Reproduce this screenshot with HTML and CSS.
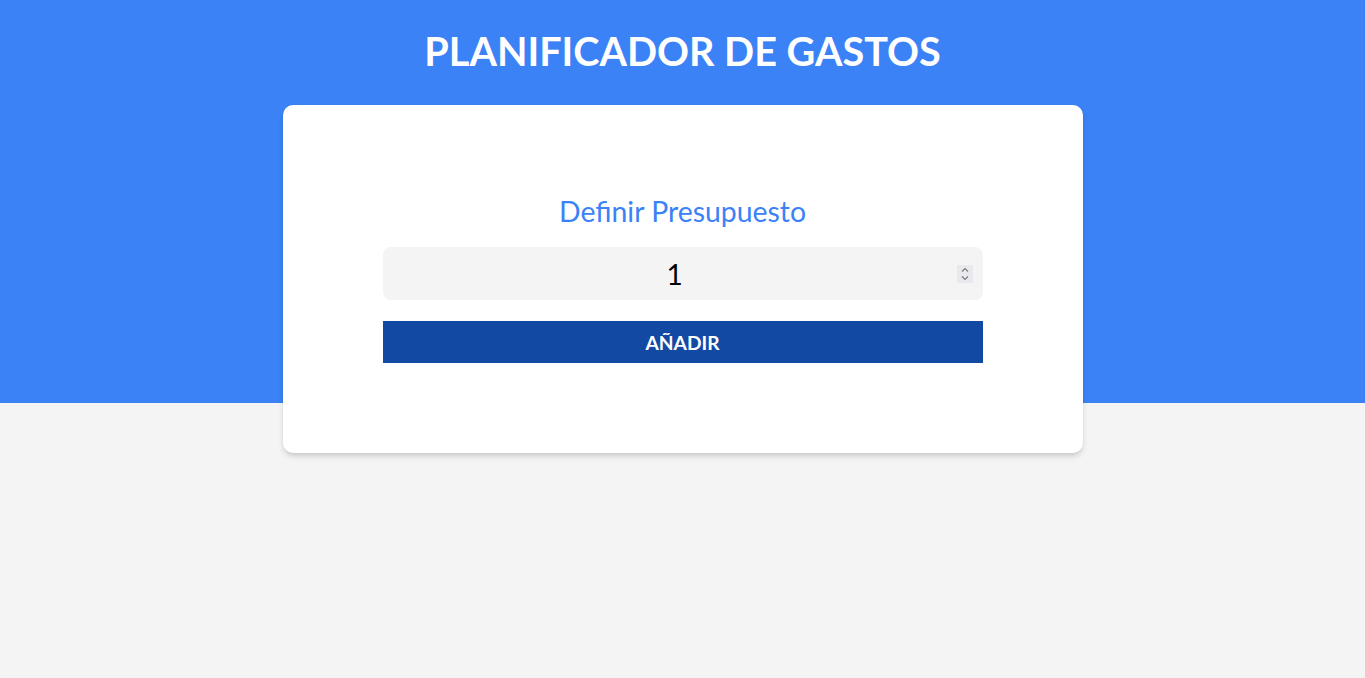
FILE: index.html
```html
<!DOCTYPE html>
<html lang="es">
<head>
  <meta charset="UTF-8" />
  <meta name="viewport" content="width=device-width, initial-scale=1" />
  <title>Planificador de Gastos</title>
  <link rel="stylesheet" href="styles.css">
</head>
<body>
  <header class="header">
    <h1>Planificador de Gastos</h1>
  </header>

  <div class="contenedor">
    <form class="presupuesto">
      <label for="presupuesto">Definir Presupuesto</label>
      <div class="campo">
        <input type="number" id="presupuesto" value="1" />
        <span class="spinner">
          <svg width="16" height="18" viewBox="0 0 16 18">
            <path d="M5 6.5 L8 3.5 L11 6.5" fill="none" stroke="#7b7b80" stroke-width="1.2" />
            <path d="M5 11.5 L8 14.5 L11 11.5" fill="none" stroke="#7b7b80" stroke-width="1.2" />
          </svg>
        </span>
      </div>
      <button type="submit">Añadir</button>
    </form>
  </div>
</body>
</html>
```

FILE: styles.css
```css
body {
  margin: 0;
  font-family: 'Lato', 'Open Sans', sans-serif;
  background-color: #f4f4f4;
  background-image: linear-gradient(#3b82f6, #3b82f6);
  background-size: 100% 403px;
  background-repeat: no-repeat;
  min-height: 678px;
}
.header {
  padding-top: 27px;
}
h1 {
  margin: 0;
  text-align: center;
  color: #fff;
  font-size: 39.6px;
  line-height: 48px;
  text-transform: uppercase;
  font-weight: 700;
}
.contenedor {
  width: 800px;
  margin: 30px auto 0;
  background-color: #fff;
  border-radius: 10px;
  box-shadow: 0 4px 6px -1px rgba(0, 0, 0, 0.15), 0 2px 4px -2px rgba(0, 0, 0, 0.1);
  padding: 89px 100px 90px;
  box-sizing: border-box;
}
.presupuesto {
  display: flex;
  flex-direction: column;
}
label {
  text-align: center;
  color: #3b82f6;
  font-size: 28.4px;
  line-height: 34px;
  margin-bottom: 19px;
}
.campo {
  position: relative;
}
input {
  display: block;
  width: 100%;
  height: 53px;
  box-sizing: border-box;
  border: none;
  border-radius: 8px;
  background-color: #f4f4f4;
  font-family: 'Lato', sans-serif;
  font-size: 28px;
  color: #000;
  text-align: center;
  padding: 0 26px 0 10px;
  outline: none;
}
input::-webkit-inner-spin-button,
input::-webkit-outer-spin-button {
  -webkit-appearance: none;
  margin: 0;
}
.spinner {
  position: absolute;
  right: 10px;
  top: 18px;
  width: 16px;
  height: 18px;
  background-color: #e9e9ed;
  display: flex;
}
button {
  margin-top: 21px;
  height: 42px;
  border: none;
  background-color: #1249a3;
  color: #fff;
  font-family: 'Lato', sans-serif;
  font-weight: 700;
  font-size: 19.2px;
  line-height: 42px;
  padding: 1px 0 0;
  text-transform: uppercase;
  cursor: pointer;
}
```
